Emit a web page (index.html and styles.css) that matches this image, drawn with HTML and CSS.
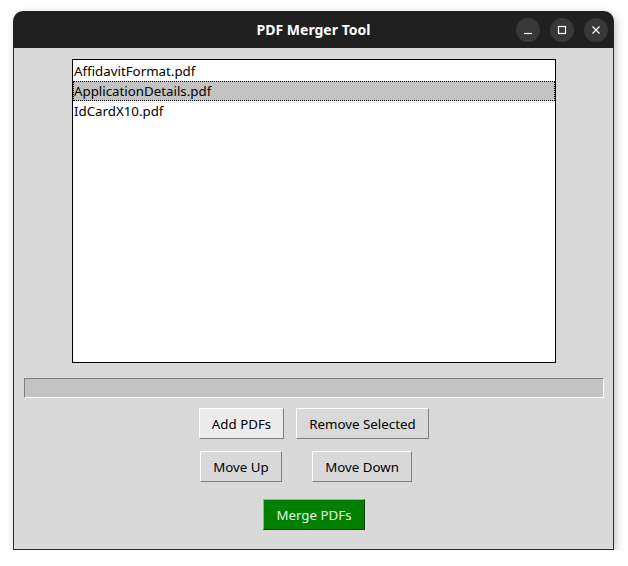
FILE: index.html
```html
<!DOCTYPE html>
<html>
<head>
<meta charset="utf-8">
<link rel="stylesheet" href="styles.css">
</head>
<body>
<div class="window">
  <div class="titlebar">
    <span class="title">PDF Merger Tool</span>
    <div class="controls">
      <span class="ctl"><svg width="10" height="10" viewBox="0 0 10 10"><path d="M1 8.5h8" stroke="#fff" stroke-width="1.2"/></svg></span>
      <span class="ctl"><svg width="10" height="10" viewBox="0 0 10 10"><rect x="1.5" y="1.5" width="7" height="7" fill="none" stroke="#fff" stroke-width="1.2"/></svg></span>
      <span class="ctl"><svg width="10" height="10" viewBox="0 0 10 10"><path d="M1.5 1.5l7 7M8.5 1.5l-7 7" stroke="#fff" stroke-width="1.2"/></svg></span>
    </div>
  </div>
  <div class="content">
    <div class="listbox">
      <div class="item">AffidavitFormat.pdf</div>
      <div class="item selected">ApplicationDetails.pdf</div>
      <div class="item">IdCardX10.pdf</div>
    </div>
    <div class="progress"></div>
    <div class="row row1">
      <button class="btn btn-add">Add PDFs</button>
      <button class="btn btn-remove">Remove Selected</button>
    </div>
    <div class="row row2">
      <button class="btn btn-up">Move Up</button>
      <button class="btn btn-down">Move Down</button>
    </div>
    <div class="row row3">
      <button class="btn btn-merge">Merge PDFs</button>
    </div>
  </div>
</div>
</body>
</html>
```
FILE: styles.css
```css
html, body {
  margin: 0;
  padding: 0;
  background: #ffffff;
}
body {
  font-family: "Noto Sans", "DejaVu Sans", sans-serif;
}
.window {
  margin: 11px 0 0 13px;
  width: 601px;
  height: 539px;
  display: flex;
  flex-direction: column;
  border-radius: 10px 10px 0 0;
  box-shadow: 2px 3px 8px rgba(0,0,0,0.25);
}
.titlebar {
  height: 37px;
  background: #202020;
  border-radius: 10px 10px 0 0;
  display: flex;
  align-items: center;
  justify-content: center;
  position: relative;
  flex: none;
}
.title {
  color: #ffffff;
  font-weight: bold;
  font-size: 14px;
  margin-left: 0;
}
.controls {
  position: absolute;
  right: 6px;
  top: 7px;
  display: flex;
  gap: 10px;
}
.ctl {
  width: 24px;
  height: 24px;
  border-radius: 50%;
  background: #383838;
  display: flex;
  align-items: center;
  justify-content: center;
}
.content {
  flex: 1;
  background: #d9d9d9;
  border: 1px solid #2a2a2a;
  border-top: none;
  display: flex;
  flex-direction: column;
  font-size: 13.3px;
  color: #000;
}
.listbox {
  margin: 11px 0 0 58px;
  width: 482px;
  height: 301px;
  border: 1px solid #000;
  background: #fff;
  padding-top: 1px;
  box-sizing: content-box;
}
.item {
  height: 20px;
  line-height: 21px;
  padding-left: 1px;
  box-sizing: border-box;
  white-space: nowrap;
}
.item.selected {
  background: #c3c3c3;
  border: 1px dotted #000;
  padding-left: 0;
  line-height: 19px;
}
.progress {
  margin: 15px 0 0 10px;
  width: 580px;
  height: 20px;
  box-sizing: border-box;
  background: #c3c3c3;
  border-top: 1px solid #808080;
  border-left: 1px solid #808080;
  border-bottom: 1px solid #ffffff;
  border-right: 1px solid #ffffff;
}
.row {
  display: flex;
  justify-content: flex-start;
}
.row1 { margin-top: 10px; }
.row2 { margin-top: 12px; }
.row3 { margin-top: 17px; }
.btn {
  font-family: "Noto Sans", "DejaVu Sans", sans-serif;
  font-size: 13.3px;
  color: #000;
  background: #d9d9d9;
  border-top: 1px solid #ffffff;
  border-left: 1px solid #ffffff;
  border-bottom: 1px solid #7f7f7f;
  border-right: 1px solid #7f7f7f;
  padding: 0;
  height: 31px;
  box-sizing: border-box;
  border-radius: 0;
}
.btn-add {
  margin-left: 185px;
  width: 85px;
  background: #ececec;
}
.btn-remove {
  margin-left: 12px;
  width: 133px;
}
.btn-up {
  margin-left: 186px;
  width: 82px;
}
.btn-down {
  margin-left: 30px;
  width: 100px;
}
.btn-merge {
  margin-left: 249px;
  width: 102px;
  background: #008000;
  color: #e6f4e6;
  border-top: 1px solid #7fbf7f;
  border-left: 1px solid #7fbf7f;
  border-bottom: 1px solid #004000;
  border-right: 1px solid #004000;
}
```
